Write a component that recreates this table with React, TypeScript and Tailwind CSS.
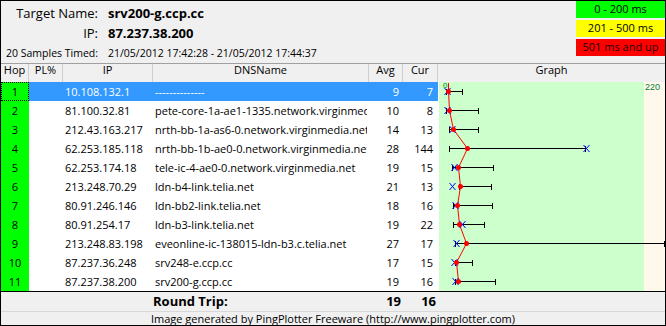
type Hop = {
  hop: number;
  ip: string;
  dns: string;
  avg: number;
  cur: number;
  // graph marks, in px inside the graph column
  lo: number;
  hi: number;
  dot: number;
  x: number;
};

const hops: Hop[] = [
  { hop: 1, ip: '10.108.132.1', dns: '--------------', avg: 9, cur: 7, lo: 8, hi: 25, dot: 10, x: 9 },
  { hop: 2, ip: '81.100.32.81', dns: 'pete-core-1a-ae1-1335.network.virginmedia.net', avg: 10, cur: 8, lo: 8, hi: 41, dot: 11, x: 9 },
  { hop: 3, ip: '212.43.163.217', dns: 'nrth-bb-1a-as6-0.network.virginmedia.net', avg: 14, cur: 13, lo: 11, hi: 41, dot: 15, x: 14 },
  { hop: 4, ip: '62.253.185.118', dns: 'nrth-bb-1b-ae0-0.network.virginmedia.net', avg: 28, cur: 144, lo: 11, hi: 148, dot: 29, x: 148 },
  { hop: 5, ip: '62.253.174.18', dns: 'tele-ic-4-ae0-0.network.virginmedia.net', avg: 19, cur: 15, lo: 14, hi: 56, dot: 20, x: 16 },
  { hop: 6, ip: '213.248.70.29', dns: 'ldn-b4-link.telia.net', avg: 21, cur: 13, lo: 21, hi: 54, dot: 22, x: 14 },
  { hop: 7, ip: '80.91.246.146', dns: 'ldn-bb2-link.telia.net', avg: 18, cur: 16, lo: 15, hi: 55, dot: 19, x: 17 },
  { hop: 8, ip: '80.91.254.17', dns: 'ldn-b3-link.telia.net', avg: 19, cur: 22, lo: 15, hi: 47, dot: 21, x: 24 },
  { hop: 9, ip: '213.248.83.198', dns: 'eveonline-ic-138015-ldn-b3.c.telia.net', avg: 27, cur: 17, lo: 17, hi: 227, dot: 28, x: 18 },
  { hop: 10, ip: '87.237.36.248', dns: 'srv248-e.ccp.cc', avg: 17, cur: 15, lo: 17, hi: 35, dot: 18, x: 16 },
  { hop: 11, ip: '87.237.38.200', dns: 'srv200-g.ccp.cc', avg: 19, cur: 16, lo: 17, hi: 58, dot: 20, x: 17 },
];

const rowY = (i: number) => 9 + i * 19 + 0.5;

function LatencyGraph() {
  const line = hops.map((h, i) => `${h.dot + 0.5},${rowY(i)}`).join(' ');
  return (
    <svg width={227} height={209} className="block shrink-0" shapeRendering="crispEdges">
      <rect x={0} y={0} width={227} height={209} fill="#ffffff" />
      <rect x={1} y={0} width={205} height={209} fill="#ccffcc" />
      <rect x={206} y={0} width={21} height={209} fill="#fff8eb" />
      <text x={5} y={6} fontSize={8} fill="#008000" fontFamily="Liberation Sans, sans-serif">0</text>
      <text x={207} y={8} fontSize={9} fill="#008040" fontFamily="Liberation Sans, sans-serif">220</text>

      {hops.map((h, i) => {
        const y = rowY(i);
        return (
          <g key={`bar${h.hop}`} stroke="#000000" strokeWidth={1}>
            <line x1={h.lo} y1={y} x2={h.hi} y2={y} />
            <line x1={h.lo + 0.5} y1={y - 3} x2={h.lo + 0.5} y2={y + 3} />
            <line x1={h.hi - 0.5} y1={y - 3} x2={h.hi - 0.5} y2={y + 3} />
          </g>
        );
      })}

      <g shapeRendering="auto">
        <line x1={hops[0].dot + 0.5} y1={1} x2={hops[0].dot + 0.5} y2={rowY(0)} stroke="#ff0000" />
        <polyline points={line} fill="none" stroke="#ff0000" strokeWidth={1} />
        {hops.map((h, i) => {
          const y = rowY(i);
          const cx = h.x + 0.5;
          return (
            <g key={`x${h.hop}`} stroke="#0000ff" strokeWidth={1}>
              <line x1={cx - 3} y1={y - 3.5} x2={cx + 3} y2={y + 3.5} />
              <line x1={cx - 3} y1={y + 3.5} x2={cx + 3} y2={y - 3.5} />
            </g>
          );
        })}
        {hops.map((h, i) => (
          <circle key={`d${h.hop}`} cx={h.dot + 0.5} cy={rowY(i)} r={2.5} fill="#ff0000" />
        ))}
      </g>
    </svg>
  );
}

function Legend() {
  return (
    <div className="flex w-[89px] flex-col gap-[2px] text-center text-[11px] leading-[15px]">
      <div className="h-[17px] bg-[#00ff00] text-black">0 - 200 ms</div>
      <div className="h-[17px] bg-[#ffff00] text-black">201 - 500 ms</div>
      <div className="h-[17px] bg-[#ff0000] text-[#200000]">501 ms and up</div>
    </div>
  );
}

export default function App() {
  return (
    <div className="flex h-[326px] w-[666px] flex-col overflow-hidden border border-black bg-[#f0f0f0] font-['Open_Sans',sans-serif] text-black">
      {/* target summary + legend */}
      <div className="flex h-[62px] justify-between">
        <div className="grid grid-cols-[97px_auto] gap-x-[10px] pt-[3px]">
          <div className="text-right text-[13px] leading-[18px]">Target Name:</div>
          <div className="text-[13px] font-bold leading-[18px]">srv200-g.ccp.cc</div>
          <div className="text-right text-[13px] leading-[18px]">IP:</div>
          <div className="text-[13px] font-bold leading-[18px]">87.237.38.200</div>
          <div className="whitespace-nowrap text-right text-[10.5px] leading-[16px]">20 Samples Timed:</div>
          <div className="whitespace-nowrap text-[10.5px] leading-[16px]">21/05/2012 17:42:28 - 21/05/2012 17:44:37</div>
        </div>
        <Legend />
      </div>

      {/* column headers */}
      <div className="flex h-[19px] border-t border-[#a0a0a0] text-center text-[11px] leading-[12px]">
        <div className="w-[28px] border-r border-[#cfcfcf]">Hop</div>
        <div className="w-[34px] border-r border-[#cfcfcf]">PL%</div>
        <div className="w-[90px] border-r border-[#cfcfcf]">IP</div>
        <div className="w-[216px] border-r border-[#cfcfcf]">DNSName</div>
        <div className="w-[34px] border-r border-[#cfcfcf]">Avg</div>
        <div className="w-[35px] border-r border-[#cfcfcf]">Cur</div>
        <div className="flex-1">Graph</div>
      </div>

      {/* hops */}
      <div className="flex h-[209px] bg-white">
        <div className="w-[437px] text-[11px] leading-[19px]">
          {hops.map((h) => {
            const sel = h.hop === 1;
            const cell = sel ? 'bg-[#3399ff] text-white' : '';
            return (
              <div key={h.hop} className="flex h-[19px]">
                <div
                  className={
                    sel
                      ? 'w-[28px] border border-dotted border-black bg-[#00ff00] text-center leading-[17px]'
                      : 'w-[28px] bg-[#00ff00] text-center'
                  }
                >
                  {h.hop}
                </div>
                <div className={`w-[34px] ${cell}`} />
                <div className={`w-[90px] pl-[2px] ${cell}`}>{h.ip}</div>
                <div className={`w-[216px] min-w-0 pl-[2px] pr-[2px] ${cell}`}>
                  <div className="overflow-hidden whitespace-nowrap">{h.dns}</div>
                </div>
                <div className={`w-[34px] pr-[4px] text-right ${cell}`}>{h.avg}</div>
                <div className={`w-[35px] pr-[5px] text-right ${cell}`}>{h.cur}</div>
              </div>
            );
          })}
        </div>
        <LatencyGraph />
      </div>

      {/* totals */}
      <div className="flex h-[20px] border-t border-black text-[13px] font-bold leading-[19px]">
        <div className="w-[152px]" />
        <div className="w-[216px]">Round Trip:</div>
        <div className="w-[34px] pr-[2px] text-right">19</div>
        <div className="w-[35px] pr-[2px] text-right">16</div>
      </div>

      <div className="h-[14px] border-t border-[#d8d8d8] text-center text-[11px] leading-[13px]">
        Image generated by PingPlotter Freeware (http://www.pingplotter.com)
      </div>
    </div>
  );
}
